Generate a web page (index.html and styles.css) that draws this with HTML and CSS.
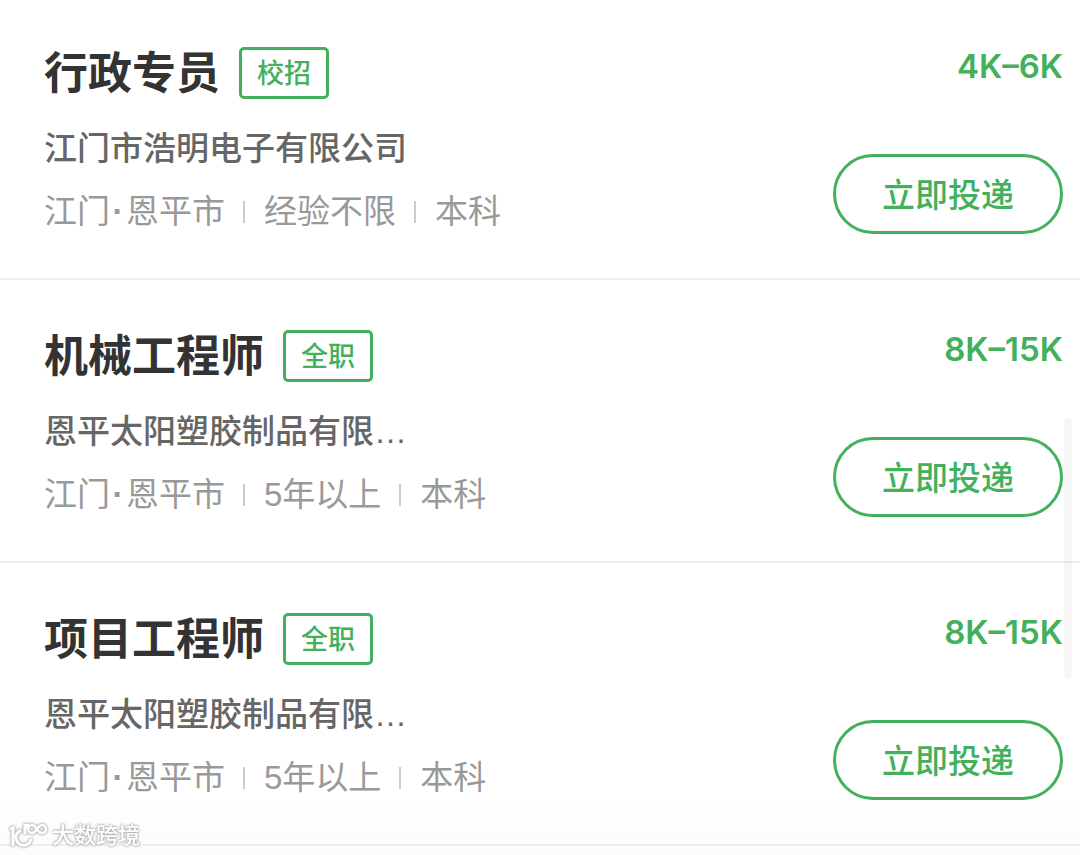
FILE: index.html
```html
<!DOCTYPE html>
<html lang="zh-CN">
<head>
<meta charset="utf-8">
<meta name="viewport" content="width=device-width, initial-scale=1">
<title>职位列表</title>
<link rel="stylesheet" href="styles.css">
</head>
<body>
<main class="page">
  <ul class="jobs">
    <li class="job">
      <div class="info">
        <div class="heading"><h2 class="title">行政专员</h2><span class="tag">校招</span></div>
        <p class="company">江门市浩明电子有限公司</p>
        <ul class="meta"><li>江门<span class="dot">·</span>恩平市</li><li>经验不限</li><li>本科</li></ul>
      </div>
      <div class="side">
        <span class="salary">4K–6K</span>
        <button class="apply" type="button">立即投递</button>
      </div>
    </li>
    <li class="job">
      <div class="info">
        <div class="heading"><h2 class="title">机械工程师</h2><span class="tag">全职</span></div>
        <p class="company">恩平太阳塑胶制品有限…</p>
        <ul class="meta"><li>江门<span class="dot">·</span>恩平市</li><li>5年以上</li><li>本科</li></ul>
      </div>
      <div class="side">
        <span class="salary">8K–15K</span>
        <button class="apply" type="button">立即投递</button>
      </div>
    </li>
    <li class="job">
      <div class="info">
        <div class="heading"><h2 class="title">项目工程师</h2><span class="tag">全职</span></div>
        <p class="company">恩平太阳塑胶制品有限…</p>
        <ul class="meta"><li>江门<span class="dot">·</span>恩平市</li><li>5年以上</li><li>本科</li></ul>
      </div>
      <div class="side">
        <span class="salary">8K–15K</span>
        <button class="apply" type="button">立即投递</button>
      </div>
    </li>
  </ul>
  <div class="scrollbar"></div>
  <div class="watermark">
    <svg class="logo" width="42" height="32" viewBox="0 0 42 32" fill="none" stroke="#fff" stroke-width="3" aria-hidden="true">
      <path d="M2 9L5 8V26"/>
      <path d="M13 10C10 12 7 15 8 18C9 27 21 28 23 19"/>
      <path d="M17 4V14M17 8Q18 5 21 5"/>
      <path d="M29 9C27 6 26 5 24 5A4 4 0 0 0 24 13C28 13 30 5 34 5A4 4 0 0 1 34 13C31 13 30 11 29 9Z" stroke-width="2.5"/>
    </svg>
    <span>大数跨境</span>
  </div>
</main>
</body>
</html>
```
FILE: styles.css
```css
* {
  box-sizing: border-box;
}

body {
  margin: 0;
  background: #fff;
  font-family: "Liberation Sans", "Noto Sans CJK SC", sans-serif;
}

.page {
  position: relative;
  min-height: 100vh;
  overflow: hidden;
  background: linear-gradient(to top, #fbfbfb, #fff 60px);
}

.jobs,
.meta {
  margin: 0;
  padding: 0;
  list-style: none;
}

.job {
  display: flex;
  justify-content: space-between;
  padding: 50px 17px 44px 44px;
  border-bottom: 2px solid #eee;
}

.job:first-child {
  padding-top: 47px;
}

.heading {
  display: flex;
  align-items: center;
  gap: 19px;
}

.title {
  margin: 0;
  padding-top: 2px;
  color: #333;
  font-size: 44px;
  font-weight: 700;
  line-height: 50px;
}

.tag {
  padding: 2px 15px 0;
  border: 3px solid #43b05c;
  border-radius: 5px;
  color: #43b05c;
  font-size: 27px;
  font-weight: 500;
  line-height: 44px;
}

.company {
  margin: 26px 0 17px;
  color: #666;
  font-size: 33px;
  font-weight: 500;
  line-height: 48px;
}

.meta {
  display: flex;
  align-items: center;
  color: #999;
  font-size: 33px;
  line-height: 44px;
}

.meta li {
  display: flex;
  align-items: center;
}

.dot {
  width: 16px;
  font-weight: 700;
  text-align: center;
}

.meta li + li::before {
  content: "";
  width: 2px;
  height: 22px;
  margin: 0 19px 0 18px;
  background: #ccc;
}

.side {
  display: flex;
  flex-direction: column;
  align-items: flex-end;
  justify-content: space-between;
}

.salary {
  color: #43b05c;
  font-family: Inter, sans-serif;
  font-size: 33px;
  font-weight: 600;
  line-height: 38px;
}

.apply {
  height: 80px;
  padding: 0 46px 2px;
  border: 3px solid #43b05c;
  border-radius: 40px;
  background: #fff;
  color: #43b05c;
  font-family: inherit;
  font-size: 33px;
  font-weight: 500;
}

.scrollbar {
  position: absolute;
  top: 418px;
  right: 8px;
  width: 8px;
  height: 261px;
  border-radius: 4px;
  background: rgba(0, 0, 0, 0.035);
}

.watermark {
  position: absolute;
  bottom: 3px;
  left: 8px;
  display: flex;
  align-items: center;
  gap: 2px;
  color: #fff;
  font-size: 22px;
  font-weight: 500;
  line-height: 32px;
  filter: drop-shadow(0 0 1px #aaa) drop-shadow(0 0 1px #bbb);
}
```
